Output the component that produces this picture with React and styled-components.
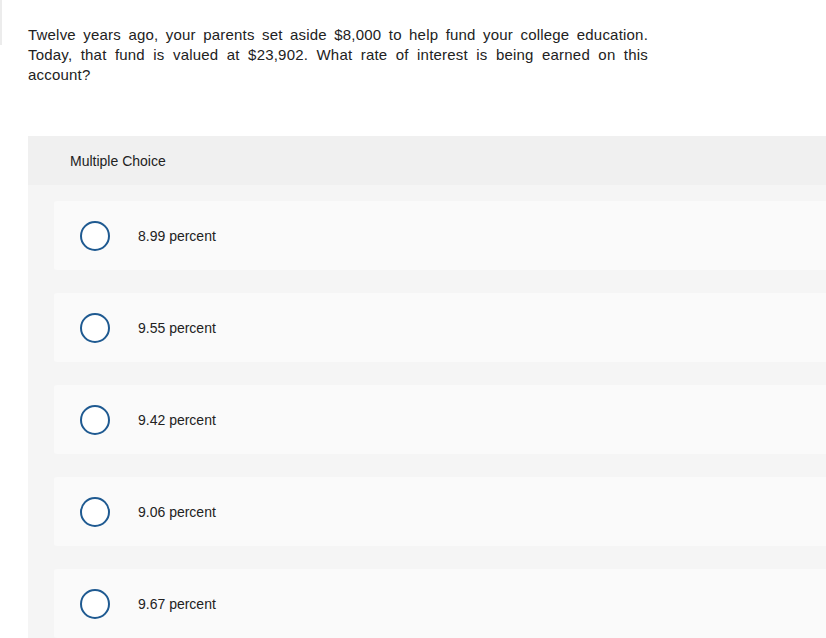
import React from "react";
import styled, { createGlobalStyle } from "styled-components";

const Global = createGlobalStyle`
  html, body { margin: 0; padding: 0; background: #fff; }
  body { font-family: "Liberation Sans", Arial, sans-serif; color: #222; }
`;

const Page = styled.div`
  position: relative;
  padding-left: 28px;
  height: 638px;
  overflow: hidden;
`;

const EdgeLine = styled.div`
  position: absolute;
  left: 0;
  top: 0;
  width: 2px;
  height: 45px;
  background: #ececec;
`;

const Question = styled.p`
  margin: 25px 0 0 0;
  width: 620px;
  font-size: 15px;
  line-height: 20px;
  letter-spacing: 0.2px;
  color: #222;
`;

const Line = styled.span`
  display: block;
  text-align: ${(p) => (p.$full ? "justify" : "left")};
  text-align-last: ${(p) => (p.$full ? "justify" : "left")};
`;

const Panel = styled.section`
  margin-top: 51px;
  background: #f5f5f5;
  padding-bottom: 40px;
`;

const Header = styled.div`
  height: 49px;
  display: flex;
  align-items: center;
  padding-left: 42px;
  background: #f0f0f0;
  font-size: 14px;
  color: #222;
`;

const Options = styled.div`
  display: flex;
  flex-direction: column;
  gap: 23px;
  padding: 16px 0 0 26px;
`;

const Option = styled.label`
  height: 69px;
  display: flex;
  align-items: center;
  padding-left: 26px;
  background: #fafafa;
  border-radius: 3px 0 0 3px;
  cursor: pointer;
`;

const Radio = styled.span`
  width: 30px;
  height: 30px;
  box-sizing: border-box;
  border: 2.5px solid #1f5a91;
  border-radius: 50%;
  background: #fff;
  flex-shrink: 0;
`;

const OptionText = styled.span`
  margin-left: 28px;
  font-size: 14px;
  color: #222;
`;

const choices = ["8.99 percent", "9.55 percent", "9.42 percent", "9.06 percent", "9.67 percent"];

export default function App() {
  return (
    <>
      <Global />
      <Page>
        <EdgeLine />
        <Question>
          <Line $full>Twelve years ago, your parents set aside $8,000 to help fund your college education.</Line>
          <Line $full>Today, that fund is valued at $23,902. What rate of interest is being earned on this</Line>
          <Line>account?</Line>
        </Question>
        <Panel>
          <Header>Multiple Choice</Header>
          <Options>
            {choices.map((c) => (
              <Option key={c}>
                <Radio />
                <OptionText>{c}</OptionText>
              </Option>
            ))}
          </Options>
        </Panel>
      </Page>
    </>
  );
}
